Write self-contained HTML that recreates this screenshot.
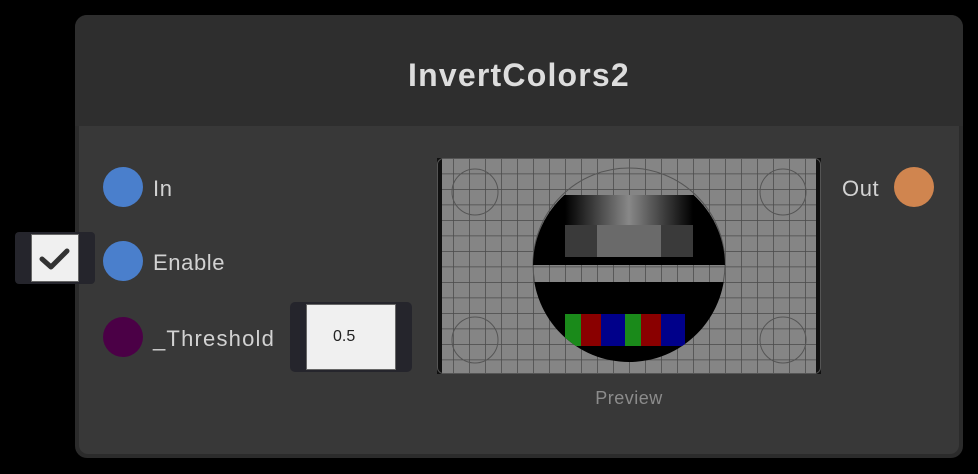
<!DOCTYPE html>
<html><head><style>
body{margin:0;width:978px;height:474px;background:#000;position:relative;overflow:hidden;font-family:"Liberation Sans",sans-serif}
.node{position:absolute;left:75px;top:15px;width:888px;height:443px;border-radius:12px;background:#2b2b2b;box-sizing:border-box}
.hdr{position:absolute;left:0;top:0;width:888px;height:111px;border-radius:12px 12px 0 0;background:#2e2e2e}
.body{position:absolute;left:4px;top:111px;width:880px;height:328px;background:#383838;border-radius:0 0 9px 9px}
.title{position:absolute;left:0;width:100%;top:42px;text-align:center;color:#ddd;font-size:32px;font-weight:bold;letter-spacing:1.2px}
.c{position:absolute;width:40px;height:40px;border-radius:50%}
.lbl{position:absolute;color:#d2d2d2;font-size:22px;letter-spacing:0.6px}
</style></head><body>
<div class="node"><div class="hdr"><div class="title">InvertColors2</div></div><div class="body"></div></div>
<div class="c" style="left:103px;top:167px;background:#4a7fcc"></div>
<div class="c" style="left:103px;top:241px;background:#4a7fcc"></div>
<div class="c" style="left:103px;top:317px;background:#4b0046"></div>
<div class="c" style="left:894px;top:167px;background:#d0854f"></div>
<div class="lbl" style="left:153px;top:176px">In</div>
<div class="lbl" style="left:153px;top:250px">Enable</div>
<div class="lbl" style="left:153px;top:326px;letter-spacing:1.2px">_Threshold</div>
<div class="lbl" style="left:842px;top:176px">Out</div>
<div style="position:absolute;left:15px;top:232px;width:80px;height:52px;background:#25252c;border-radius:4px"></div>
<div style="position:absolute;left:31px;top:234px;width:46px;height:46px;background:#f0f0f0;border:1px solid #666"></div>
<svg style="position:absolute;left:31px;top:234px" width="48" height="48"><path d="M11 25 L20 33 L36 17" stroke="#333" stroke-width="5" fill="none" stroke-linecap="round" stroke-linejoin="round"/></svg>
<div style="position:absolute;left:290px;top:302px;width:122px;height:70px;background:#25252c;border-radius:5px"></div>
<div style="position:absolute;left:306px;top:304px;width:88px;height:64px;background:#f0f0f0;border:1px solid #666;font-size:16px;color:#222;line-height:64px;box-sizing:content-box"><span style="margin-left:26px">0.5</span></div>
<svg style="position:absolute;left:437px;top:158px" width="384" height="216" viewBox="0 0 384 216">
<defs><clipPath id="cc"><circle cx="192" cy="108" r="96"/></clipPath>
<linearGradient id="g" x1="0" x2="1"><stop offset="0" stop-color="#000"/><stop offset="0.5" stop-color="#888"/><stop offset="1" stop-color="#000"/></linearGradient>
<pattern id="grid" width="16" height="15.5" patternUnits="userSpaceOnUse"><path d="M0 0H16M0 0V16" stroke="#4a4a4a" stroke-width="1.5" fill="none"/></pattern></defs>
<rect x="0" y="0" width="384" height="216" rx="6" fill="#858585"/>
<rect x="0" y="0" width="384" height="216" fill="url(#grid)"/>
<rect x="0" y="0" width="5" height="216" fill="#111"/><rect x="379" y="0" width="5" height="216" fill="#111"/>
<g fill="none" stroke="#555" stroke-width="1"><circle cx="38" cy="34" r="23"/><circle cx="346" cy="34" r="23"/><circle cx="38" cy="182" r="23"/><circle cx="346" cy="182" r="23"/><circle cx="192" cy="106" r="96"/></g>
<g clip-path="url(#cc)">
<rect x="90" y="37" width="204" height="70" fill="#000"/>
<rect x="128" y="37" width="128" height="30" fill="url(#g)"/>
<rect x="128" y="67" width="32" height="32" fill="#3a3a3a"/><rect x="160" y="67" width="64" height="32" fill="#6a6a6a"/><rect x="224" y="67" width="32" height="32" fill="#3a3a3a"/>
<rect x="90" y="124" width="204" height="80" fill="#000"/>
<rect x="128" y="156" width="16" height="32" fill="#1a8a1a"/><rect x="144" y="156" width="20" height="32" fill="#8a0000"/><rect x="164" y="156" width="24" height="32" fill="#00008a"/><rect x="188" y="156" width="16" height="32" fill="#1a8a1a"/><rect x="204" y="156" width="20" height="32" fill="#8a0000"/><rect x="224" y="156" width="24" height="32" fill="#00008a"/>
</g>
<rect x="0.5" y="0.5" width="383" height="215" rx="6" fill="none" stroke="#555"/>
</svg>
<div style="position:absolute;left:437px;width:384px;top:388px;text-align:center;color:#8c8c8c;font-size:18px;letter-spacing:0.5px">Preview</div>
</body></html>
